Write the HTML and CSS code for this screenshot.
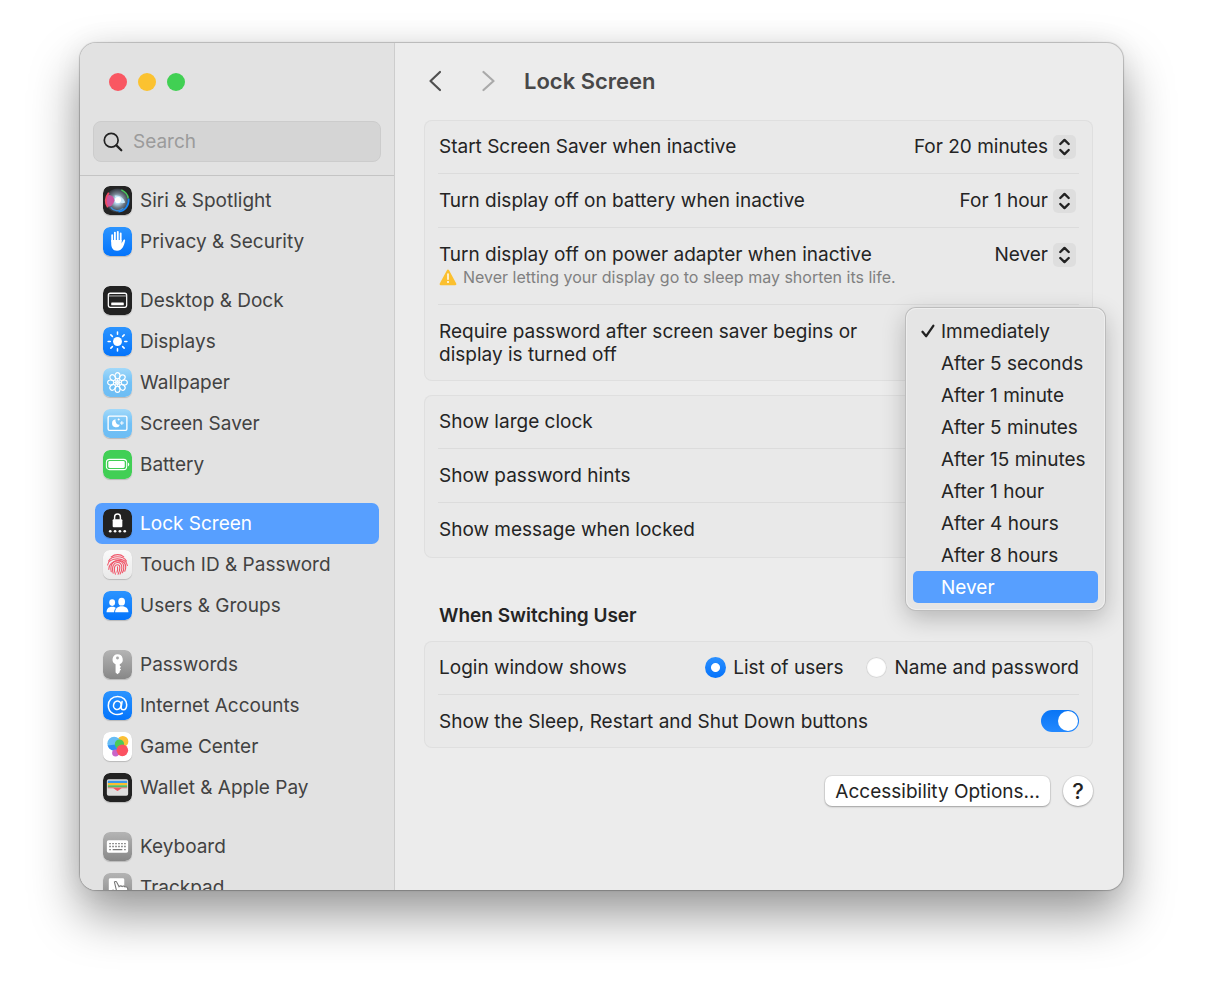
FILE: index.html
```html
<!DOCTYPE html>
<html lang="en">
<head>
<meta charset="utf-8">
<meta name="viewport" content="width=device-width, initial-scale=1">
<title>Lock Screen</title>
<link rel="stylesheet" href="styles.css">
</head>
<body>
<svg class="defs" aria-hidden="true">
  <defs>
    <linearGradient id="blue" x1="0" y1="0" x2="0" y2="1"><stop offset="0" stop-color="#2b94ff"/><stop offset="1" stop-color="#0474fb"/></linearGradient>
    <linearGradient id="sky" x1="0" y1="0" x2="0" y2="1"><stop offset="0" stop-color="#a2d9fa"/><stop offset=".5" stop-color="#72c1f6"/><stop offset="1" stop-color="#6dbdf4"/></linearGradient>
    <linearGradient id="gray" x1="0" y1="0" x2="0" y2="1"><stop offset="0" stop-color="#b4b4b4"/><stop offset="1" stop-color="#878787"/></linearGradient>
    <linearGradient id="paper" x1="0" y1="0" x2="0" y2="1"><stop offset="0" stop-color="#fafafa"/><stop offset="1" stop-color="#e9e9e9"/></linearGradient>
    <radialGradient id="orb"><stop offset="0" stop-color="#ffffff"/><stop offset=".25" stop-color="#b9dcf2"/><stop offset=".6" stop-color="#6f7b88"/><stop offset="1" stop-color="#30353c"/></radialGradient>
    <symbol id="updown" viewBox="0 0 23 24"><path d="M7.3 9 11.5 4.9 15.7 9M7.3 15 11.5 19.1 15.7 15" fill="none" stroke="#222" stroke-width="2.4" stroke-linecap="round" stroke-linejoin="round"/></symbol>
  </defs>
</svg>
<div class="window">
  <aside class="sidebar">
    <div class="sidebar-top">
      <div class="lights">
        <button class="light close" type="button" aria-label="Close"></button>
        <button class="light minimize" type="button" aria-label="Minimize"></button>
        <button class="light zoom" type="button" aria-label="Zoom"></button>
      </div>
      <label class="search">
        <svg width="20" height="20" viewBox="0 0 20 20" fill="none" stroke="#222" stroke-linecap="round"><circle cx="8.2" cy="8.2" r="6.9" stroke-width="1.7"/><path d="m13.4 13.4 4.9 4.9" stroke-width="2.2"/></svg>
        <input type="search" placeholder="Search" aria-label="Search">
      </label>
    </div>
    <nav class="nav" aria-label="Settings">
      <ul class="group">
        <li><a class="item" href="#siri"><svg class="icon" viewBox="0 0 30 30"><rect width="30" height="30" rx="7" fill="#242424"/><circle cx="15" cy="15" r="12.500" fill="url(#orb)"/><path d="M4 10c4-2 7 1 8 5-2 5-4 7-7 6-2-3-2.500-8-1-11z" fill="#c8559f"/><path d="M6 7C2 12 2 18 5 22" fill="none" stroke="#f04b65" stroke-width="2"/><path d="M19 4c4 2 7 5 7 9" fill="none" stroke="#49c85b" stroke-width="1.500"/><path d="M26.500 13C27 20 23 26 16 26.500" fill="none" stroke="#1686f5" stroke-width="1.800"/><path d="M8 22c3 4 8 5 13 1" fill="none" stroke="#3f8dd6" stroke-width="1.500"/><path d="M12 10c5-1 9 2 11 7-4 2-8 0-11-7z" fill="#c8e8f8"/><circle cx="15.500" cy="14.500" r="3.200" fill="#fff"/></svg>Siri &amp; Spotlight</a></li>
        <li><a class="item" href="#privacy"><svg class="icon" viewBox="0 0 30 30"><rect width="30" height="30" rx="7" fill="url(#blue)"/><g fill="none" stroke="#fff" stroke-linecap="round" stroke-width="1.900"><path d="M9.500 15V8.500M12.300 14V5.800M15.300 14V5M18.300 14V6.600M19.500 18.500 22 13.800"/></g><path d="M8.500 13.500H19.300V17L22.800 14C22 18.500 20.500 24.500 14.500 24.500 10 24.500 8.500 21 8.500 17z" fill="#fff"/></svg>Privacy &amp; Security</a></li>
      </ul>
      <ul class="group">
        <li><a class="item" href="#desktop"><svg class="icon" viewBox="0 0 30 30"><rect width="30" height="30" rx="7" fill="#222"/><rect x="5.500" y="7.500" width="19" height="14.500" rx="2" fill="none" stroke="#fff" stroke-width="1.300"/><path d="M6 10.300H24" stroke="#bbb" stroke-width="1"/><rect x="8.500" y="17" width="13" height="3" rx=".6" fill="#fff"/></svg>Desktop &amp; Dock</a></li>
        <li><a class="item" href="#displays"><svg class="icon" viewBox="0 0 30 30"><rect width="30" height="30" rx="7" fill="url(#blue)"/><circle cx="15" cy="15" r="4.600" fill="#fff"/><path d="M15 5.300v2.200M15 22.500v2.200M5.300 15h2.200M22.500 15h2.200M8.100 8.100l1.600 1.600M20.300 20.300l1.600 1.600M8.100 21.900l1.600-1.600M20.300 9.700l1.600-1.600" stroke="#fff" stroke-width="1.600" stroke-linecap="round"/></svg>Displays</a></li>
        <li><a class="item" href="#wallpaper"><svg class="icon" viewBox="0 0 30 30"><rect width="30" height="30" rx="7" fill="url(#sky)"/><g fill="none" stroke="#fff" stroke-width="1.200"><circle cx="15" cy="15" r="2"/><ellipse cx="15" cy="8" rx="2.600" ry="3.200"/><ellipse cx="15" cy="22" rx="2.600" ry="3.200"/><ellipse cx="8" cy="15" rx="3.200" ry="2.600"/><ellipse cx="22" cy="15" rx="3.200" ry="2.600"/><g transform="rotate(45 15 15)"><ellipse cx="15" cy="8" rx="2.600" ry="3.200"/><ellipse cx="15" cy="22" rx="2.600" ry="3.200"/><ellipse cx="8" cy="15" rx="3.200" ry="2.600"/><ellipse cx="22" cy="15" rx="3.200" ry="2.600"/></g><path d="M15 11v8M11 15h8M12.200 12.200l5.600 5.600M17.800 12.200l-5.600 5.600" stroke-width=".8"/></g></svg>Wallpaper</a></li>
        <li><a class="item" href="#saver"><svg class="icon" viewBox="0 0 30 30"><rect width="30" height="30" rx="7" fill="url(#sky)"/><rect x="5.300" y="7.300" width="19.400" height="14.800" rx="1.500" fill="none" stroke="#fff" stroke-width="1.400"/><path d="M13 10.600A4.200 4.200 0 1 0 17.500 16.200 4.300 4.300 0 0 1 13 10.600z" fill="#fff"/><path d="M19.500 12.500v4M17.500 14.500h4M16.200 9.800v2M15.200 10.800h2" stroke="#fff" stroke-width="1"/></svg>Screen Saver</a></li>
        <li><a class="item" href="#battery"><svg class="icon" viewBox="0 0 30 30"><rect width="30" height="30" rx="7" fill="#41cf55"/><rect x="3.500" y="9.700" width="21" height="10.600" rx="3.200" fill="none" stroke="#fff" stroke-width="1.100"/><rect x="5.500" y="11.500" width="17" height="7" rx="1.500" fill="#fff"/><path d="M25.800 13v4c1.800-.7 1.800-3.300 0-4z" fill="#fff"/></svg>Battery</a></li>
      </ul>
      <ul class="group">
        <li><a class="item selected" href="#lock" aria-current="page"><svg class="icon" viewBox="0 0 30 30"><rect width="30" height="30" rx="7" fill="#222"/><rect x="10" y="10.500" width="10" height="8.500" rx="1.200" fill="#fff"/><path d="M12 11V8.200a3 3 0 0 1 6 0V11" fill="none" stroke="#fff" stroke-width="1.500"/><g fill="#fff"><circle cx="7.500" cy="23" r="1.400"/><circle cx="12.500" cy="23" r="1.400"/><circle cx="17.500" cy="23" r="1.400"/><circle cx="22.500" cy="23" r="1.400"/></g></svg>Lock Screen</a></li>
        <li><a class="item" href="#touch"><svg class="icon" viewBox="0 0 30 30"><rect width="30" height="30" rx="7" fill="url(#paper)"/><g fill="none" stroke="#f0576a" stroke-width="1.150" stroke-linecap="round"><path d="M8.500 7.200C12.500 4 18 4 21.500 7.200"/><path d="M5.800 11.500C9 5.500 21 5.500 24.200 11.500"/><path d="M4.800 15.500C5.500 7 24.500 7 25.200 16"/><path d="M6 20C5.500 9.500 23.500 7.500 23.500 17.500 23.500 19.500 23 21 22.500 22"/><path d="M8.500 22.500C6.500 13 13 11 15 11c4 0 6.500 3 6.500 7 0 2.500-.8 4.500-1.500 5.500"/><path d="M10.500 24C8.500 16.500 11.500 13 15 13s4.500 3 4.500 5.500-.9 4.500-1.800 6.300"/><path d="M12.800 25c-1.800-5-1.500-9.800 2.200-9.800 3.500 0 2.800 5.300.6 9.800"/><path d="M15 17.500c.3 2.500 0 4-.5 5.500"/></g></svg>Touch ID &amp; Password</a></li>
        <li><a class="item" href="#users"><svg class="icon" viewBox="0 0 30 30"><rect width="30" height="30" rx="7" fill="url(#blue)"/><g fill="#fff"><ellipse cx="9.500" cy="12" rx="3" ry="3.400"/><path d="M3.700 22c0-3.500 2-5.700 5.800-5.700 1.600 0 2.900.5 3.900 1.400-1.200 1.100-1.800 2.500-1.900 4.300z"/><ellipse cx="19.300" cy="11" rx="3.500" ry="4"/><path d="M12.500 22c0-4 2.700-6.200 6.900-6.200s6.900 2.200 6.900 6.200z"/></g></svg>Users &amp; Groups</a></li>
      </ul>
      <ul class="group">
        <li><a class="item" href="#passwords"><svg class="icon" viewBox="0 0 30 30"><rect width="30" height="30" rx="7" fill="url(#gray)"/><path fill-rule="evenodd" d="M15 4.500a5.400 5.400 0 0 1 2.300 10.300V16l1.400 1.300-1.400 1.500 1.400 1.500-1.400 1.500v1.300L15 25.200l-2-2V14.800A5.400 5.400 0 0 1 15 4.500zM15 6.800a1.500 1.500 0 1 0 0 3 1.500 1.500 0 0 0 0-3z" fill="#fff"/></svg>Passwords</a></li>
        <li><a class="item" href="#internet"><svg class="icon" viewBox="0 0 30 30"><rect width="30" height="30" rx="7" fill="url(#blue)"/><g fill="none" stroke="#fff" stroke-width="1.600" stroke-linecap="round"><path d="M20 23c-6 3.200-14.500.5-14.500-8 0-5.500 4-9.300 9.700-9.300 5.500 0 9.300 3.500 9.300 8.600 0 3.200-1.400 5.200-3.500 5.200-1.700 0-2.500-1.200-2.200-3l.9-5.500"/><ellipse cx="14.800" cy="14.800" rx="3.900" ry="4.400" transform="rotate(15 14.800 14.800)"/></g></svg>Internet Accounts</a></li>
        <li><a class="item" href="#games"><svg class="icon" viewBox="0 0 30 30"><rect width="30" height="30" rx="7" fill="#fff"/><circle cx="20.500" cy="9.800" r="5.700" fill="#fbbf35"/><circle cx="11.500" cy="12" r="7" fill="#67bdf5"/><path d="M4.800 14a7 7 0 0 0 10 4.300L13 13z" fill="#2b8cf5"/><circle cx="17" cy="12.500" r="4.800" fill="#4acb58"/><circle cx="13" cy="21.800" r="3.600" fill="#c965c8"/><circle cx="20" cy="19" r="6" fill="#fb5261"/></svg>Game Center</a></li>
        <li><a class="item" href="#wallet"><svg class="icon" viewBox="0 0 30 30"><rect width="30" height="30" rx="7" fill="#222"/><rect x="4" y="6.500" width="22" height="17" rx="1.800" fill="#dedede"/><path d="M5 8h20v2.400H5z" fill="#3896ea"/><path d="M5 10.400h20v2.200H5z" fill="#fbbd31"/><path d="M5 12.600h20v2.300H5z" fill="#51bd64"/><path d="M5 14.900h20v1H19.500C18 15.900 17 18.500 15 18.500s-3-2.600-4.500-2.600H5z" fill="#f45661"/></svg>Wallet &amp; Apple Pay</a></li>
      </ul>
      <ul class="group">
        <li><a class="item" href="#keyboard"><svg class="icon" viewBox="0 0 30 30"><rect width="30" height="30" rx="7" fill="url(#gray)"/><rect x="4" y="8.500" width="22" height="13" rx="1.800" fill="#fff"/><path d="M6.500 12h17M6.500 15h17" stroke="#777" stroke-width="1.400" stroke-dasharray="1.600 1.480"/><path d="M6.500 18.200h1.600M10 18.200h10M21.900 18.200h1.600" stroke="#777" stroke-width="1.300"/></svg>Keyboard</a></li>
        <li><a class="item" href="#trackpad"><svg class="icon" viewBox="0 0 30 30"><rect width="30" height="30" rx="7" fill="url(#gray)"/><rect x="6" y="5.500" width="16" height="17" rx="1.500" fill="#fff"/><path d="M11.800 9.200c1-.9 2.200-.3 2.600.7l2.200 4.300c1.200-1.300 2.500-1 3.200-.2 1-.8 2.300-.5 2.900.4 1.200-.4 2.300.3 2.800 1.300L26 20v6H15l-5.500-6.500c-.6-1.200.5-2.200 1.500-1.700l3 .6z" fill="#fff" stroke="#777" stroke-width="1.100"/></svg>Trackpad</a></li>
      </ul>
    </nav>
  </aside>

  <main class="main">
    <header class="toolbar">
      <button class="arrow" type="button" aria-label="Back"><svg width="14" height="22" viewBox="0 0 14 22"><path d="M12 2 2.500 11l9.500 9" fill="none" stroke="#505050" stroke-width="2.200" stroke-linecap="round" stroke-linejoin="round"/></svg></button>
      <button class="arrow" type="button" aria-label="Forward" disabled><svg width="14" height="22" viewBox="0 0 14 22"><path d="m2.500 2 10 9-10 9" fill="none" stroke="#aaa" stroke-width="2.200" stroke-linecap="round" stroke-linejoin="round"/></svg></button>
      <h1>Lock Screen</h1>
    </header>

    <section class="card">
      <div class="row">
        <label for="saver-delay">Start Screen Saver when inactive</label>
        <span class="popup"><select id="saver-delay"><option>For 20 minutes</option></select><svg class="stepper"><use href="#updown"/></svg></span>
      </div>
      <div class="row">
        <label for="battery-delay">Turn display off on battery when inactive</label>
        <span class="popup"><select id="battery-delay"><option>For 1 hour</option></select><svg class="stepper"><use href="#updown"/></svg></span>
      </div>
      <div class="row">
        <div>
          <label for="power-delay">Turn display off on power adapter when inactive</label>
          <p class="note"><svg width="18" height="17" viewBox="0 0 18 17"><path d="M9 1.800 16.200 15H1.800z" fill="#fbc02f" stroke="#fbc02f" stroke-width="2.400" stroke-linejoin="round"/><path d="M9 5v5.300" stroke="#fff" stroke-width="1.500" stroke-linecap="round"/><circle cx="9" cy="13" r="1" fill="#fff"/></svg>Never letting your display go to sleep may shorten its life.</p>
        </div>
        <span class="popup"><select id="power-delay"><option>Never</option></select><svg class="stepper"><use href="#updown"/></svg></span>
      </div>
      <div class="row">
        <span class="wrap" id="password-label">Require password after screen saver begins or display is turned off</span>
        <div class="menu" role="listbox" aria-labelledby="password-label">
          <button type="button" role="option" aria-selected="true"><svg class="check" viewBox="0 0 14 14"><path d="m1.500 7.800 3.700 4.400L12.300 1.800" fill="none" stroke="#222" stroke-width="2.300" stroke-linecap="round" stroke-linejoin="round"/></svg>Immediately</button>
          <button type="button" role="option">After 5 seconds</button>
          <button type="button" role="option">After 1 minute</button>
          <button type="button" role="option">After 5 minutes</button>
          <button type="button" role="option">After 15 minutes</button>
          <button type="button" role="option">After 1 hour</button>
          <button type="button" role="option">After 4 hours</button>
          <button type="button" role="option">After 8 hours</button>
          <button type="button" role="option" class="active">Never</button>
        </div>
      </div>
    </section>

    <section class="card">
      <div class="row"><label for="clock">Show large clock</label><input class="switch" type="checkbox" id="clock" checked></div>
      <div class="row"><label for="hints">Show password hints</label><input class="switch" type="checkbox" id="hints"></div>
      <div class="row"><label for="message">Show message when locked</label><input class="switch" type="checkbox" id="message"></div>
    </section>

    <h2>When Switching User</h2>
    <section class="card">
      <div class="row">
        <span id="login-label">Login window shows</span>
        <div class="radios" role="radiogroup" aria-labelledby="login-label">
          <label><input type="radio" name="login" checked>List of users</label>
          <label><input type="radio" name="login">Name and password</label>
        </div>
      </div>
      <div class="row"><label for="power-buttons">Show the Sleep, Restart and Shut Down buttons</label><input class="switch" type="checkbox" id="power-buttons" checked></div>
    </section>

    <footer class="actions">
      <button class="push" type="button">Accessibility Options...</button>
      <button class="help" type="button" aria-label="Help">?</button>
    </footer>
  </main>
</div>
</body>
</html>
```

FILE: styles.css
```css
* { box-sizing: border-box; }

body {
  margin: 0;
  height: 100vh;
  padding: 43px 93px 102px 80px;
  display: flex;
  background: #fff;
  color: #242424;
  font: 19px/23px Inter, "Liberation Sans", sans-serif;
}

button, input, select { font: inherit; color: inherit; }
button { border: 0; padding: 0; background: none; }
h1, h2, p, ul { margin: 0; padding: 0; }
ul { list-style: none; }
svg { display: block; flex: none; }
.defs { position: absolute; width: 0; height: 0; }

.window {
  flex: 1;
  min-width: 0;
  display: flex;
  overflow: hidden;
  border-radius: 16px;
  background: #ececec;
  box-shadow: 0 0 1px 1px rgba(0, 0, 0, .22), 0 25px 50px rgba(0, 0, 0, .4), 0 0 30px rgba(0, 0, 0, .06);
}

/* Sidebar */
.sidebar {
  flex: 0 0 315px;
  display: flex;
  flex-direction: column;
  overflow: hidden;
  border-right: 1px solid #cdcdcd;
  background: #e2e2e2;
  color: #424242;
}
.sidebar-top {
  padding: 30px 13px 13px;
  border-bottom: 1px solid #c4c4c4;
}
.lights { display: flex; gap: 11px; padding: 0 16px; }
.light { width: 18px; height: 18px; border-radius: 50%; }
.close { background: #f95762; }
.minimize { background: #fbc230; }
.zoom { background: #41d053; }
.search {
  display: flex;
  align-items: center;
  gap: 10px;
  height: 41px;
  margin-top: 30px;
  padding: 0 9px;
  border: 1px solid #cccccc;
  border-radius: 8px;
  background: #d5d5d5;
}
.search input {
  flex: 1;
  min-width: 0;
  padding: 0;
  border: 0;
  outline: 0;
  background: none;
}
.search input::placeholder { color: #9b9b9b; opacity: 1; }

.nav {
  flex: 1;
  min-height: 0;
  overflow: hidden;
  padding: 4px 15px;
}
.group + .group { margin-top: 18px; }
.item {
  display: flex;
  align-items: center;
  gap: 8px;
  height: 41px;
  padding: 0 8px;
  border-radius: 7px;
  color: inherit;
  text-decoration: none;
}
.item.selected { background: #579fff; color: #fff; }
.icon {
  width: 29px;
  height: 29px;
  border-radius: 7px;
  box-shadow: 0 1px 1px rgba(0, 0, 0, .18);
}

/* Content */
.main { flex: 1; min-width: 0; padding: 22px 30px 0 29px; }
.toolbar {
  display: flex;
  align-items: center;
  gap: 39px;
  height: 32px;
  padding-left: 4px;
  margin-bottom: 23px;
}
.toolbar h1 {
  margin-left: -10px;
  color: #484848;
  font-size: 22px;
  font-weight: 600;
  line-height: 32px;
}
h2 {
  margin: 46px 15px 14px;
  font-size: 19px;
  font-weight: 600;
}

.card {
  padding: 0 14px;
  border-radius: 8px;
  background: #e9e9e9;
  box-shadow: inset 0 0 0 1px #dfdfdf;
}
.card + .card { margin-top: 14px; padding-bottom: 2px; }
.row {
  position: relative;
  display: flex;
  justify-content: space-between;
  align-items: flex-start;
  gap: 16px;
  padding: 15px 0 15px 1px;
}
.row + .row { border-top: 1px solid #dcdcdc; }
.wrap { max-width: 440px; }
.note {
  display: flex;
  align-items: center;
  gap: 6px;
  color: #808080;
  font-size: 16px;
}

.popup {
  display: flex;
  align-items: center;
  gap: 5px;
  height: 23px;
  margin-right: 3px;
}
.popup select {
  appearance: none;
  padding: 0;
  border: 0;
  outline: 0;
  background: none;
  text-align: right;
}
.stepper {
  width: 23px;
  height: 24px;
  border-radius: 5px;
  background: #dedede;
}

.menu {
  position: absolute;
  z-index: 2;
  top: 3px;
  right: -26px;
  width: 199px;
  padding: 7px;
  border-radius: 10px;
  background: #e5e5e5;
  box-shadow: 0 0 0 1px #bcbcbc, inset 0 0 0 1px #eeeeee, 0 8px 24px rgba(0, 0, 0, .24);
}
.menu button {
  display: flex;
  align-items: center;
  gap: 6px;
  width: 100%;
  height: 32px;
  padding-left: 28px;
  border-radius: 5px;
}
.menu button[aria-selected="true"] { padding-left: 8px; }
.menu .active { background: #579fff; color: #fff; }
.check { width: 14px; height: 14px; }

.radios { display: flex; gap: 23px; }
.radios label { display: flex; align-items: center; gap: 7px; }
.radios input {
  appearance: none;
  width: 21px;
  height: 21px;
  margin: 0;
  border-radius: 50%;
  background: #fff;
  box-shadow: inset 0 0 1px 1px #d2d2d2;
}
.radios input:checked {
  background: radial-gradient(circle, #fff 0 4px, transparent 5px), linear-gradient(#2b90ff, #0472fb);
  box-shadow: none;
}
.switch {
  appearance: none;
  display: flex;
  width: 38px;
  height: 22px;
  margin: 0;
  padding: 1px;
  border-radius: 11px;
  background: #cfcfcf;
}
.switch::before {
  content: "";
  width: 20px;
  height: 20px;
  border-radius: 50%;
  background: #fff;
}
.switch:checked { justify-content: flex-end; background: linear-gradient(#0975f5, #2389ff); }

.actions {
  display: flex;
  justify-content: flex-end;
  gap: 13px;
  margin-top: 28px;
}
.push, .help {
  height: 30px;
  background: #fff;
  box-shadow: 0 0 0 1px rgba(0, 0, 0, .06), 0 1px 2px rgba(0, 0, 0, .28);
}
.push { padding: 0 10px; border-radius: 7px; }
.help { width: 30px; border-radius: 50%; font-size: 22px; font-weight: 500; }
```
